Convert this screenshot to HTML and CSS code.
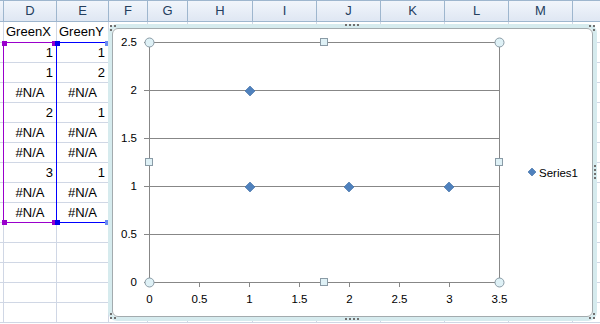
FILE: index.html
```html
<!DOCTYPE html>
<html>
<head>
<meta charset="utf-8">
<link rel="stylesheet" href="styles.css">
</head>
<body>
<div class="sheet">
  <div class="row hdr"><div class="c"></div><div class="c">D</div><div class="c">E</div><div class="c">F</div><div class="c">G</div><div class="c">H</div><div class="c">I</div><div class="c">J</div><div class="c">K</div><div class="c">L</div><div class="c">M</div><div class="c"></div></div>
  <div class="row first"><div class="c"></div><div class="c t">GreenX</div><div class="c t">GreenY</div><div class="c"></div><div class="c"></div><div class="c"></div><div class="c"></div><div class="c"></div><div class="c"></div><div class="c"></div><div class="c"></div><div class="c"></div></div>
  <div class="row"><div class="c"></div><div class="c n">1</div><div class="c n">1</div><div class="c"></div><div class="c"></div><div class="c"></div><div class="c"></div><div class="c"></div><div class="c"></div><div class="c"></div><div class="c"></div><div class="c"></div></div>
  <div class="row"><div class="c"></div><div class="c n">1</div><div class="c n">2</div><div class="c"></div><div class="c"></div><div class="c"></div><div class="c"></div><div class="c"></div><div class="c"></div><div class="c"></div><div class="c"></div><div class="c"></div></div>
  <div class="row"><div class="c"></div><div class="c na">#N/A</div><div class="c na">#N/A</div><div class="c"></div><div class="c"></div><div class="c"></div><div class="c"></div><div class="c"></div><div class="c"></div><div class="c"></div><div class="c"></div><div class="c"></div></div>
  <div class="row"><div class="c"></div><div class="c n">2</div><div class="c n">1</div><div class="c"></div><div class="c"></div><div class="c"></div><div class="c"></div><div class="c"></div><div class="c"></div><div class="c"></div><div class="c"></div><div class="c"></div></div>
  <div class="row"><div class="c"></div><div class="c na">#N/A</div><div class="c na">#N/A</div><div class="c"></div><div class="c"></div><div class="c"></div><div class="c"></div><div class="c"></div><div class="c"></div><div class="c"></div><div class="c"></div><div class="c"></div></div>
  <div class="row"><div class="c"></div><div class="c na">#N/A</div><div class="c na">#N/A</div><div class="c"></div><div class="c"></div><div class="c"></div><div class="c"></div><div class="c"></div><div class="c"></div><div class="c"></div><div class="c"></div><div class="c"></div></div>
  <div class="row"><div class="c"></div><div class="c n">3</div><div class="c n">1</div><div class="c"></div><div class="c"></div><div class="c"></div><div class="c"></div><div class="c"></div><div class="c"></div><div class="c"></div><div class="c"></div><div class="c"></div></div>
  <div class="row"><div class="c"></div><div class="c na">#N/A</div><div class="c na">#N/A</div><div class="c"></div><div class="c"></div><div class="c"></div><div class="c"></div><div class="c"></div><div class="c"></div><div class="c"></div><div class="c"></div><div class="c"></div></div>
  <div class="row"><div class="c"></div><div class="c na">#N/A</div><div class="c na">#N/A</div><div class="c"></div><div class="c"></div><div class="c"></div><div class="c"></div><div class="c"></div><div class="c"></div><div class="c"></div><div class="c"></div><div class="c"></div></div>
  <div class="row"><div class="c"></div><div class="c"></div><div class="c"></div><div class="c"></div><div class="c"></div><div class="c"></div><div class="c"></div><div class="c"></div><div class="c"></div><div class="c"></div><div class="c"></div><div class="c"></div></div>
  <div class="row"><div class="c"></div><div class="c"></div><div class="c"></div><div class="c"></div><div class="c"></div><div class="c"></div><div class="c"></div><div class="c"></div><div class="c"></div><div class="c"></div><div class="c"></div><div class="c"></div></div>
  <div class="row"><div class="c"></div><div class="c"></div><div class="c"></div><div class="c"></div><div class="c"></div><div class="c"></div><div class="c"></div><div class="c"></div><div class="c"></div><div class="c"></div><div class="c"></div><div class="c"></div></div>
  <div class="row"><div class="c"></div><div class="c"></div><div class="c"></div><div class="c"></div><div class="c"></div><div class="c"></div><div class="c"></div><div class="c"></div><div class="c"></div><div class="c"></div><div class="c"></div><div class="c"></div></div>
  <div class="row"><div class="c"></div><div class="c"></div><div class="c"></div><div class="c"></div><div class="c"></div><div class="c"></div><div class="c"></div><div class="c"></div><div class="c"></div><div class="c"></div><div class="c"></div><div class="c"></div></div>

  <div class="range range-d"></div>
  <div class="range range-e"></div>
  <div class="hd hd-purple" style="left:2px;top:41px"></div>
  <div class="hd hd-purple" style="left:2px;top:220px"></div>
  <div class="hd hd-purple" style="left:52px;top:41px"></div>
  <div class="hd hd-purple" style="left:52px;top:220px"></div>
  <div class="hd hd-blue" style="left:55px;top:41px"></div>
  <div class="hd hd-blue" style="left:55px;top:220px"></div>
  <div class="hd hd-light" style="left:105px;top:41px"></div>
  <div class="hd hd-light" style="left:105px;top:220px"></div>

  <div class="chart">
    <div class="chart-inner">
      <svg class="plot" width="479" height="287" viewBox="113 29 479 287">
        <g class="grid">
          <line x1="144" y1="42.5" x2="499" y2="42.5"/>
          <line x1="144" y1="90.5" x2="499" y2="90.5"/>
          <line x1="144" y1="138.5" x2="499" y2="138.5"/>
          <line x1="144" y1="186.5" x2="499" y2="186.5"/>
          <line x1="144" y1="234.5" x2="499" y2="234.5"/>
          <line x1="144" y1="282.5" x2="499.5" y2="282.5"/>
          <line x1="149.5" y1="42" x2="149.5" y2="287"/>
          <line x1="499.5" y1="42" x2="499.5" y2="287"/>
          <line x1="199.5" y1="282" x2="199.5" y2="287"/>
          <line x1="249.5" y1="282" x2="249.5" y2="287"/>
          <line x1="299.5" y1="282" x2="299.5" y2="287"/>
          <line x1="349.5" y1="282" x2="349.5" y2="287"/>
          <line x1="399.5" y1="282" x2="399.5" y2="287"/>
          <line x1="449.5" y1="282" x2="449.5" y2="287"/>
        </g>
        <g class="ylab">
          <text x="137" y="46">2.5</text>
          <text x="137" y="94">2</text>
          <text x="137" y="142">1.5</text>
          <text x="137" y="190">1</text>
          <text x="137" y="238">0.5</text>
          <text x="137" y="286">0</text>
        </g>
        <g class="xlab">
          <text x="149.5" y="303">0</text>
          <text x="199.5" y="303">0.5</text>
          <text x="249.5" y="303">1</text>
          <text x="299.5" y="303">1.5</text>
          <text x="349.5" y="303">2</text>
          <text x="399.5" y="303">2.5</text>
          <text x="449.5" y="303">3</text>
          <text x="499.5" y="303">3.5</text>
        </g>
        <g class="pts">
          <polygon points="250,86 255,91 250,96 245,91"/>
          <polygon points="250,182 255,187 250,192 245,187"/>
          <polygon points="349,182 354,187 349,192 344,187"/>
          <polygon points="449,182 454,187 449,192 444,187"/>
          <polygon points="532,168 536,172 532,176 528,172"/>
        </g>
        <text class="legend" x="539" y="176.5">Series1</text>
        <g class="sel">
          <circle cx="149.5" cy="42.5" r="4.5"/>
          <circle cx="499.5" cy="42.5" r="4.5"/>
          <circle cx="149.5" cy="282.5" r="4.5"/>
          <circle cx="499.5" cy="282.5" r="4.5"/>
          <rect x="320.5" y="38.5" width="7" height="7"/>
          <rect x="320.5" y="278.5" width="7" height="7"/>
          <rect x="145.5" y="158.5" width="7" height="7"/>
          <rect x="495.5" y="158.5" width="7" height="7"/>
        </g>
      </svg>
    </div>
    <div class="grip grip-top"></div>
    <div class="grip grip-bottom"></div>
    <div class="grip grip-right"></div>
    <div class="corner corner-tl"></div>
    <div class="corner corner-tr"></div>
    <div class="corner corner-bl"></div>
    <div class="corner corner-br"></div>
  </div>
</div>
</body>
</html>
```
FILE: styles.css
```css
html, body {
  margin: 0;
  padding: 0;
  background: #ffffff;
  overflow: hidden;
}
.sheet {
  position: relative;
  width: 600px;
  height: 324px;
  overflow: hidden;
  font-family: "Liberation Sans", Arial, sans-serif;
  font-size: 13px;
  color: #000;
}
.row {
  display: grid;
  grid-template-columns: 4px 53px 52px 39px 40px 65px 64px 64px 64px 64px 64px 40px;
  height: 20px;
}
.row.first { height: 21px; }
.row.hdr { height: 22px; }
.c {
  box-sizing: border-box;
  border-right: 1px solid #d0d7e5;
  border-bottom: 1px solid #d0d7e5;
  line-height: 19px;
  white-space: nowrap;
  overflow: hidden;
}
.hdr .c {
  background: linear-gradient(#f1f5fb, #dfe7f3);
  border-right-color: #9eb6ce;
  border-bottom-color: #9eb6ce;
  border-top: 1px solid #9eb6ce;
  text-align: center;
  line-height: 19px;
  color: #243e5e;
}
.first .c { line-height: 20px; }
.t { padding-left: 2px; }
.n { text-align: right; padding-right: 3px; }
.na { text-align: center; }

.range {
  position: absolute;
  top: 42px;
  height: 181px;
  box-sizing: border-box;
}
.range-d {
  left: 3px;
  width: 53px;
  border: 1px solid #9900cc;
  border-right: none;
}
.range-e {
  left: 56px;
  width: 53px;
  border: 1px solid #0000ff;
}
.hd {
  position: absolute;
  width: 5px;
  height: 5px;
}
.hd-purple { background: #9900cc; }
.hd-blue { background: #0000ee; }
.hd-light { background: #6a8cf0; }

.chart {
  position: absolute;
  left: 108px;
  top: 24px;
  width: 489px;
  height: 297px;
  box-sizing: border-box;
  border: 4px solid #d6ebee;
  border-radius: 9px;
  background: #fff;
}
.chart-inner {
  box-sizing: border-box;
  width: 100%;
  height: 100%;
  border: 1px solid #a3abae;
  border-radius: 6px;
  background: #fff;
  overflow: hidden;
}
.plot {
  display: block;
  font-family: "Liberation Sans", Arial, sans-serif;
}
.grid line {
  stroke: #878787;
  stroke-width: 1;
}
.ylab text {
  font-size: 11.5px;
  text-anchor: end;
  fill: #000;
}
.xlab text {
  font-size: 11.5px;
  text-anchor: middle;
  fill: #000;
}
.pts polygon {
  fill: #4f81bd;
  stroke: #3d6aa1;
  stroke-width: 0.6;
}
.legend {
  font-size: 11.5px;
  fill: #000;
}
.sel circle, .sel rect {
  fill: #dff1f6;
  stroke: #8a9ba6;
  stroke-width: 1;
}
.grip {
  position: absolute;
  width: 2px;
  height: 2px;
  background: #707070;
}
.grip-top {
  left: 233px;
  top: -4px;
  box-shadow: 4px 0 #707070, 8px 0 #707070, 12px 0 #707070;
}
.grip-bottom {
  left: 233px;
  bottom: -3px;
  box-shadow: 4px 0 #707070, 8px 0 #707070, 12px 0 #707070;
}
.grip-right {
  right: -3px;
  top: 137px;
  box-shadow: 0 4px #707070, 0 8px #707070, 0 12px #707070;
}
.corner {
  position: absolute;
  width: 2px;
  height: 2px;
  background: #707070;
}
.corner-tl {
  left: -2px;
  top: -3px;
  box-shadow: 4px 0 #707070, 0 4px #707070;
}
.corner-tr {
  right: -2px;
  top: -3px;
  box-shadow: -4px 0 #707070, 0 4px #707070;
}
.corner-bl {
  left: -2px;
  bottom: -2px;
  box-shadow: 4px 0 #707070, 0 -4px #707070;
}
.corner-br {
  right: -2px;
  bottom: -2px;
  box-shadow: -4px 0 #707070, 0 -4px #707070;
}
```
